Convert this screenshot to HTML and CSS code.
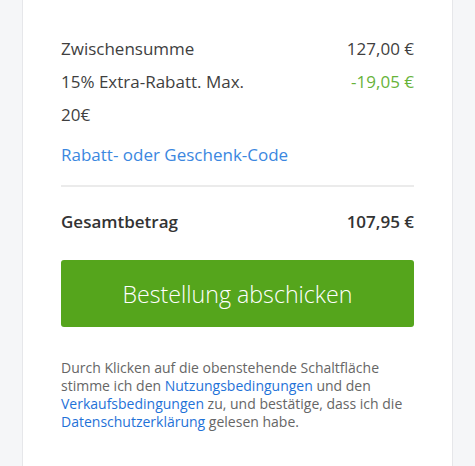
FILE: index.html
```html
<!DOCTYPE html>
<html lang="de">
<head>
<meta charset="utf-8">
<link rel="stylesheet" href="styles.css">
</head>
<body>
<div class="page">
  <section class="card">
    <div class="row">
      <span class="label">Zwischensumme</span>
      <span class="value">127,00 €</span>
    </div>
    <div class="row">
      <span class="label">15% Extra-Rabatt. Max. 20€</span>
      <span class="value discount">-19,05 €</span>
    </div>
    <a class="code-link" href="#">Rabatt- oder Geschenk-Code</a>
    <hr class="divider">
    <div class="row total">
      <span class="label">Gesamtbetrag</span>
      <span class="value">107,95 €</span>
    </div>
    <button class="submit" type="button">Bestellung abschicken</button>
    <p class="terms">Durch Klicken auf die obenstehende Schaltfläche stimme ich den <a href="#">Nutzungsbedingungen</a> und den <a href="#">Verkaufsbedingungen</a> zu, und bestätige, dass ich die <a href="#">Datenschutzerklärung</a> gelesen habe.</p>
  </section>
</div>
</body>
</html>
```

FILE: styles.css
```css
html, body {
  margin: 0;
  padding: 0;
  background: #f5f6f8;
  font-family: "Open Sans", "Liberation Sans", sans-serif;
  color: #3f3f3f;
}
.page {
  padding: 0 22px;
  height: 466px;
  overflow: hidden;
}
.card {
  background: #fff;
  border-left: 1px solid #e6e7ea;
  border-right: 1px solid #e6e7ea;
  padding: 32px 38px 40px;
  min-height: 100%;
  box-sizing: border-box;
  display: flex;
  flex-direction: column;
}
.card > * {
  flex-shrink: 0;
}
.row {
  display: flex;
  justify-content: space-between;
  align-items: flex-start;
  font-size: 17px;
  line-height: 33px;
}
.label {
  max-width: 205px;
}
.value {
  white-space: nowrap;
}
.discount {
  color: #67b33a;
}
.code-link {
  margin-top: 7px;
  font-size: 17px;
  line-height: 33px;
  color: #3b87e0;
  text-decoration: none;
  align-self: flex-start;
}
.divider {
  margin: 14px 0 0;
  border: 0;
  height: 2px;
  background: #ebebeb;
}
.total {
  margin-top: 18px;
  font-weight: 600;
  color: #333;
}
.submit {
  margin-top: 22px;
  height: 67px;
  border: 0;
  border-radius: 3px;
  background: #55a51c;
  color: #fff;
  font-family: inherit;
  font-size: 23.2px;
  font-weight: 300;
  cursor: pointer;
}
.terms {
  margin: 32px 0 0;
  font-size: 14px;
  line-height: 18px;
  color: #666;
}
.terms a {
  color: #1f72d8;
  text-decoration: none;
}
```
